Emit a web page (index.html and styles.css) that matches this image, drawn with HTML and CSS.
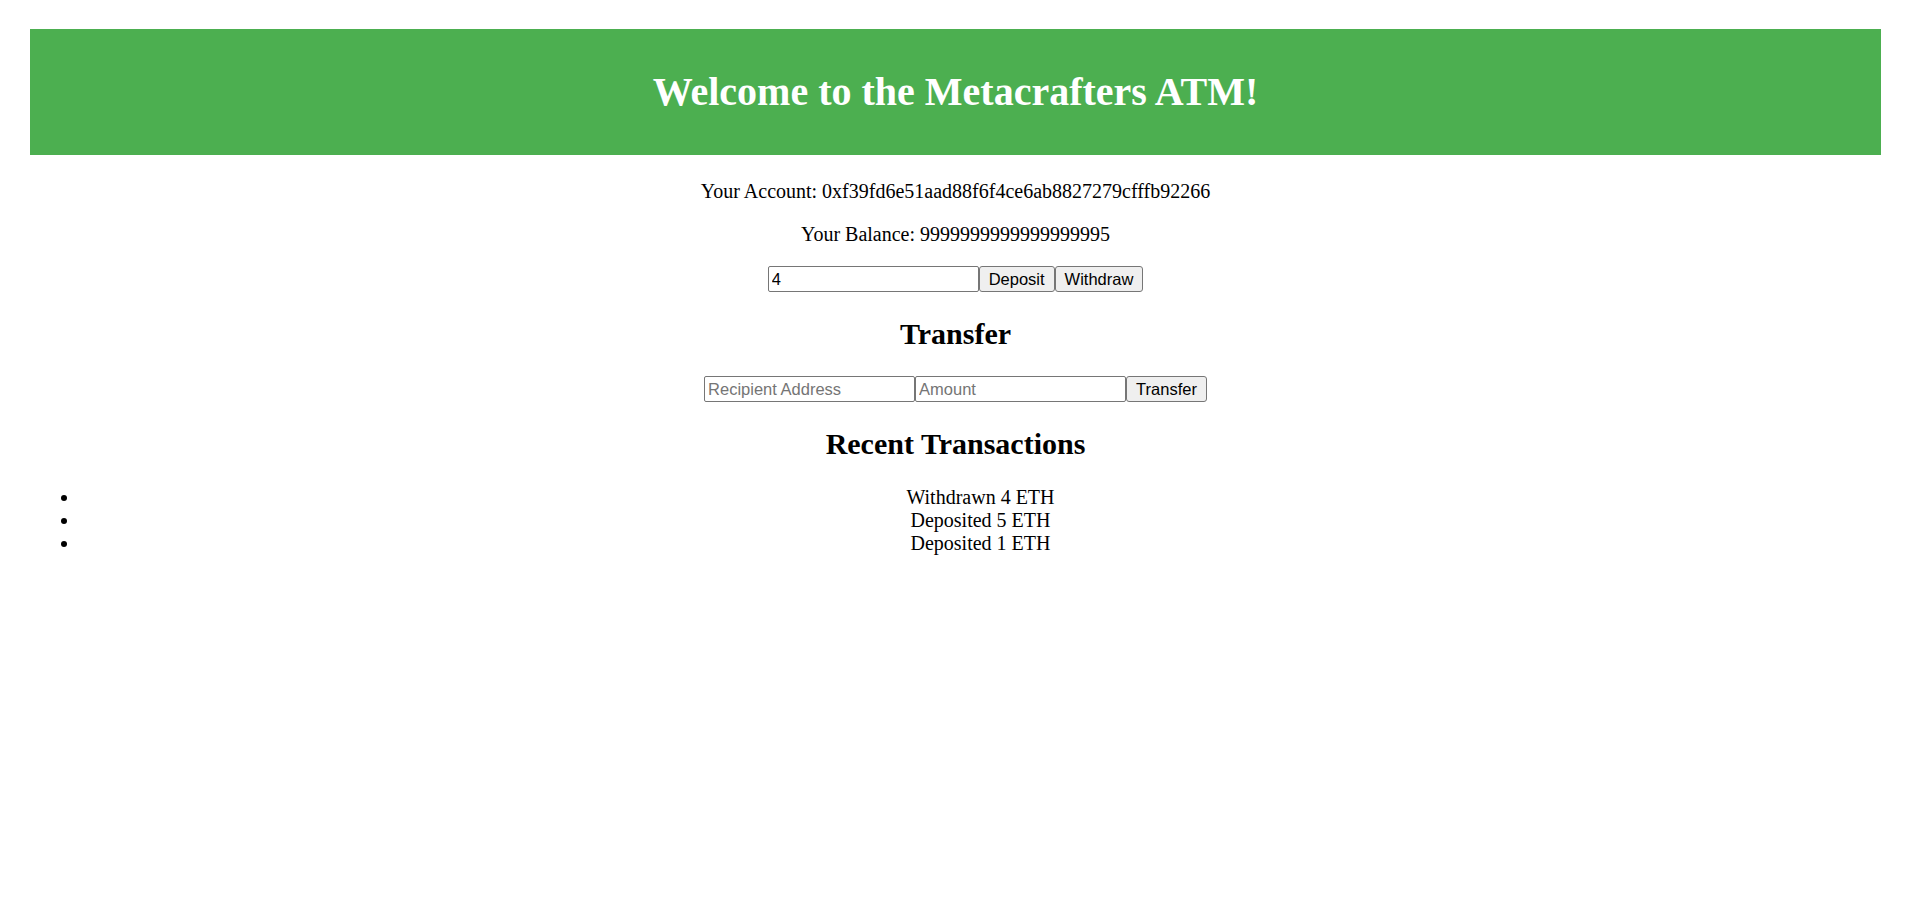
FILE: index.html
```html
<!DOCTYPE html>
<html>
<head>
<meta charset="utf-8">
<title>Metacrafters ATM</title>
<link rel="stylesheet" href="styles.css">
</head>
<body>
<main class="page">
  <header class="banner"><h1 class="banner-title">Welcome to the Metacrafters ATM!</h1></header>
  <section class="account">
    <p class="info first">Your Account: 0xf39fd6e51aad88f6f4ce6ab8827279cfffb92266</p>
    <p class="info">Your Balance: 9999999999999999995</p>
    <div class="row"><input class="field" type="text" value="4"><button class="btn">Deposit</button><button class="btn">Withdraw</button></div>
    <h2 class="section-title">Transfer</h2>
    <div class="row"><input class="field" type="text" placeholder="Recipient Address"><input class="field" type="text" placeholder="Amount"><button class="btn">Transfer</button></div>
    <h2 class="section-title">Recent Transactions</h2>
    <ul class="tx-list">
      <li>Withdrawn 4 ETH</li>
      <li>Deposited 5 ETH</li>
      <li>Deposited 1 ETH</li>
    </ul>
  </section>
</main>
</body>
</html>
```
FILE: styles.css
```css
html, body {
  margin: 0;
  padding: 0;
  background: #ffffff;
}
body {
  font-family: "Liberation Serif", "Times New Roman", serif;
  font-size: 20px;
  line-height: 23px;
  color: #000000;
}
.page {
  margin: 0 30px;
  padding-top: 29px;
}
.banner {
  background: #4caf50;
  height: 126px;
  display: flex;
  align-items: center;
  justify-content: center;
}
.banner-title {
  margin: 0;
  color: #ffffff;
  font-size: 40px;
  line-height: 46px;
  font-weight: bold;
  text-align: center;
}
.account {
  text-align: center;
}
.info {
  margin: 20px 0;
}
.info.first {
  margin-top: 25px;
}
.row {
  display: flex;
  justify-content: center;
  margin: 0;
}
.field {
  box-sizing: border-box;
  width: 211px;
  height: 26px;
  margin: 0;
  padding: 0 3px;
  border: 1px solid #767676;
  border-radius: 2px;
  font-family: "Liberation Sans", Arial, sans-serif;
  font-size: 16.5px;
  color: #000000;
  background: #ffffff;
}
.field::placeholder {
  color: #757575;
}
.btn {
  box-sizing: border-box;
  height: 26px;
  margin: 0;
  padding: 0 9px;
  border: 1px solid #767676;
  border-radius: 3px;
  background: #efefef;
  font-family: "Liberation Sans", Arial, sans-serif;
  font-size: 16.5px;
  color: #000000;
}
.section-title {
  margin: 25px 0;
  font-size: 30px;
  line-height: 34px;
  font-weight: bold;
}
.tx-list {
  margin: 25px 0;
  padding-left: 50px;
}
```
